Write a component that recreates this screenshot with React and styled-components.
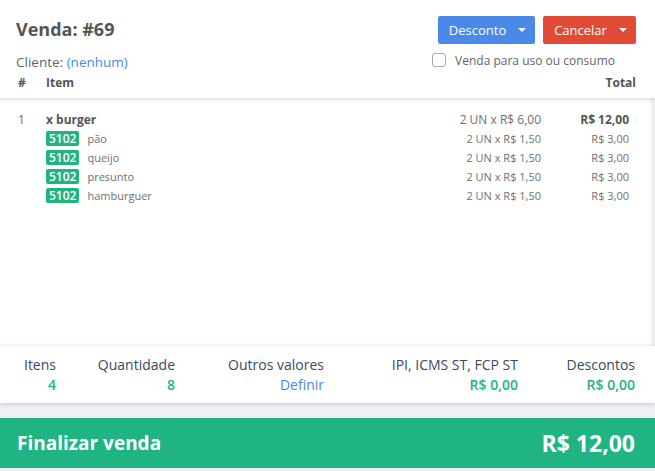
import React from 'react'
import styled, { createGlobalStyle } from 'styled-components'

const GlobalStyle = createGlobalStyle`
  html, body { margin: 0; padding: 0; background: #eff0f5; }
  body { font-family: 'Open Sans', 'Liberation Sans', sans-serif; }
  * { box-sizing: border-box; }
`

const Page = styled.div`
  height: 471px;
  display: flex;
  flex-direction: column;
  background: #eff0f5;
  overflow: hidden;
`

const Header = styled.header`
  height: 98px;
  background: #fff;
  padding: 14px 19px 0 16px;
  box-shadow: 0 2px 3px rgba(0, 0, 0, 0.12);
  position: relative;
  z-index: 2;
`

const TopRow = styled.div`
  display: flex;
  justify-content: space-between;
  align-items: center;
  height: 30px;
`

const Title = styled.h1`
  margin: 0;
  font-size: 18px;
  font-weight: 700;
  color: #555;
`

const Buttons = styled.div`
  display: flex;
  gap: 8px;
  margin-top: 1px;
`

const Button = styled.button`
  height: 28px;
  width: ${p => p.$w}px;
  border: none;
  border-radius: 2px;
  background: ${p => p.$color};
  color: #fff;
  font-family: inherit;
  font-size: 13px;
  display: flex;
  align-items: center;
  justify-content: center;
  gap: 12px;
  padding: 0 0 0 2px;
`

const Caret = styled.span`
  width: 0;
  height: 0;
  border-left: 4px solid transparent;
  border-right: 4px solid transparent;
  border-top: 4px solid #fff;
`

const MetaRow = styled.div`
  display: flex;
  justify-content: space-between;
  align-items: center;
  margin-top: 9px;
  font-size: 13.5px;
  color: #666;
`

const Link = styled.span`
  color: #4a89e8;
`

const Check = styled.label`
  display: flex;
  align-items: center;
  gap: 9px;
  font-size: 12px;
  color: #666;
  margin-top: -4px;
  margin-right: 21px;
`

const Box = styled.span`
  width: 14px;
  height: 14px;
  border: 1px solid #aaa;
  border-radius: 3px;
  background: #fff;
`

const ColHead = styled.div`
  display: flex;
  align-items: center;
  margin-top: 3px;
  font-size: 12px;
  font-weight: 700;
  color: #555;
`

const Num = styled.span`
  width: 30px;
  padding-left: 2px;
`

const Grow = styled.span`
  flex: 1;
`

const Body = styled.main`
  flex: 1;
  background: #fff;
  border-right: 4px solid #efefef;
  padding: 12px 22px 0 16px;
`

const Row = styled.div`
  display: flex;
  align-items: center;
  height: 19px;
  font-size: ${p => (p.$main ? 12 : 11)}px;
  color: #707070;
`

const Name = styled.span`
  flex: 1;
  display: flex;
  align-items: center;
  gap: 8px;
  font-weight: ${p => (p.$bold ? 700 : 400)};
  color: ${p => (p.$bold ? '#555' : '#707070')};
`

const Badge = styled.span`
  background: #20b483;
  color: #fff;
  font-size: 12px;
  font-weight: 600;
  border-radius: 2px;
  padding: 0 3px;
  height: 15px;
  line-height: 15px;
`

const Qty = styled.span`
  width: 200px;
  text-align: right;
`

const Total = styled.span`
  width: 88px;
  text-align: right;
  font-weight: ${p => (p.$bold ? 700 : 400)};
  color: ${p => (p.$bold ? '#555' : '#707070')};
`

const Summary = styled.section`
  height: 57px;
  background: #fff;
  display: flex;
  align-items: center;
  padding: 0 20px 0 0;
  box-shadow: 0 2px 4px rgba(0, 0, 0, 0.12), 0 -1px 3px rgba(0, 0, 0, 0.08);
  position: relative;
  z-index: 1;
`

const Stat = styled.div`
  width: ${p => p.$w}px;
  text-align: right;
  font-size: 14px;
  line-height: 20px;
  color: #3b4a5c;
`

const StatValue = styled.div`
  color: ${p => (p.$link ? '#4a89e8' : '#20b483')};
  font-weight: ${p => (p.$link ? 400 : 600)};
`

const Gap = styled.div`
  height: 15px;
`

const Footer = styled.footer`
  height: 50px;
  background: #20b483;
  color: #fff;
  display: flex;
  align-items: center;
  justify-content: space-between;
  padding: 0 20px 0 17px;
  font-weight: 700;
  margin-bottom: 3px;
`

const FooterLabel = styled.span`
  font-size: 19px;
`

const FooterTotal = styled.span`
  font-size: 23px;
`

const parts = ['pão', 'queijo', 'presunto', 'hamburguer']

const stats = [
  { label: 'Itens', value: '4', w: 56 },
  { label: 'Quantidade', value: '8', w: 119 },
  { label: 'Outros valores', value: 'Definir', w: 149, link: true },
  { label: 'IPI, ICMS ST, FCP ST', value: 'R$ 0,00', w: 194 },
  { label: 'Descontos', value: 'R$ 0,00', w: 117 }
]

export default function App() {
  return (
    <Page>
      <GlobalStyle />
      <Header>
        <TopRow>
          <Title>Venda: #69</Title>
          <Buttons>
            <Button $color="#4a89e8" $w={97}>Desconto <Caret /></Button>
            <Button $color="#e04b35" $w={93}>Cancelar <Caret /></Button>
          </Buttons>
        </TopRow>
        <MetaRow>
          <span>Cliente: <Link>(nenhum)</Link></span>
          <Check><Box />Venda para uso ou consumo</Check>
        </MetaRow>
        <ColHead>
          <Num>#</Num>
          <Grow>Item</Grow>
          <span>Total</span>
        </ColHead>
      </Header>

      <Body>
        <Row $main>
          <Num>1</Num>
          <Name $bold>x burger</Name>
          <Qty>2 UN x R$ 6,00</Qty>
          <Total $bold>R$ 12,00</Total>
        </Row>
        {parts.map(p => (
          <Row key={p}>
            <Num />
            <Name><Badge>5102</Badge>{p}</Name>
            <Qty>2 UN x R$ 1,50</Qty>
            <Total>R$ 3,00</Total>
          </Row>
        ))}
      </Body>

      <Summary>
        {stats.map(s => (
          <Stat key={s.label} $w={s.w}>
            <div>{s.label}</div>
            <StatValue $link={s.link}>{s.value}</StatValue>
          </Stat>
        ))}
      </Summary>

      <Gap />

      <Footer>
        <FooterLabel>Finalizar venda</FooterLabel>
        <FooterTotal>R$ 12,00</FooterTotal>
      </Footer>
    </Page>
  )
}
